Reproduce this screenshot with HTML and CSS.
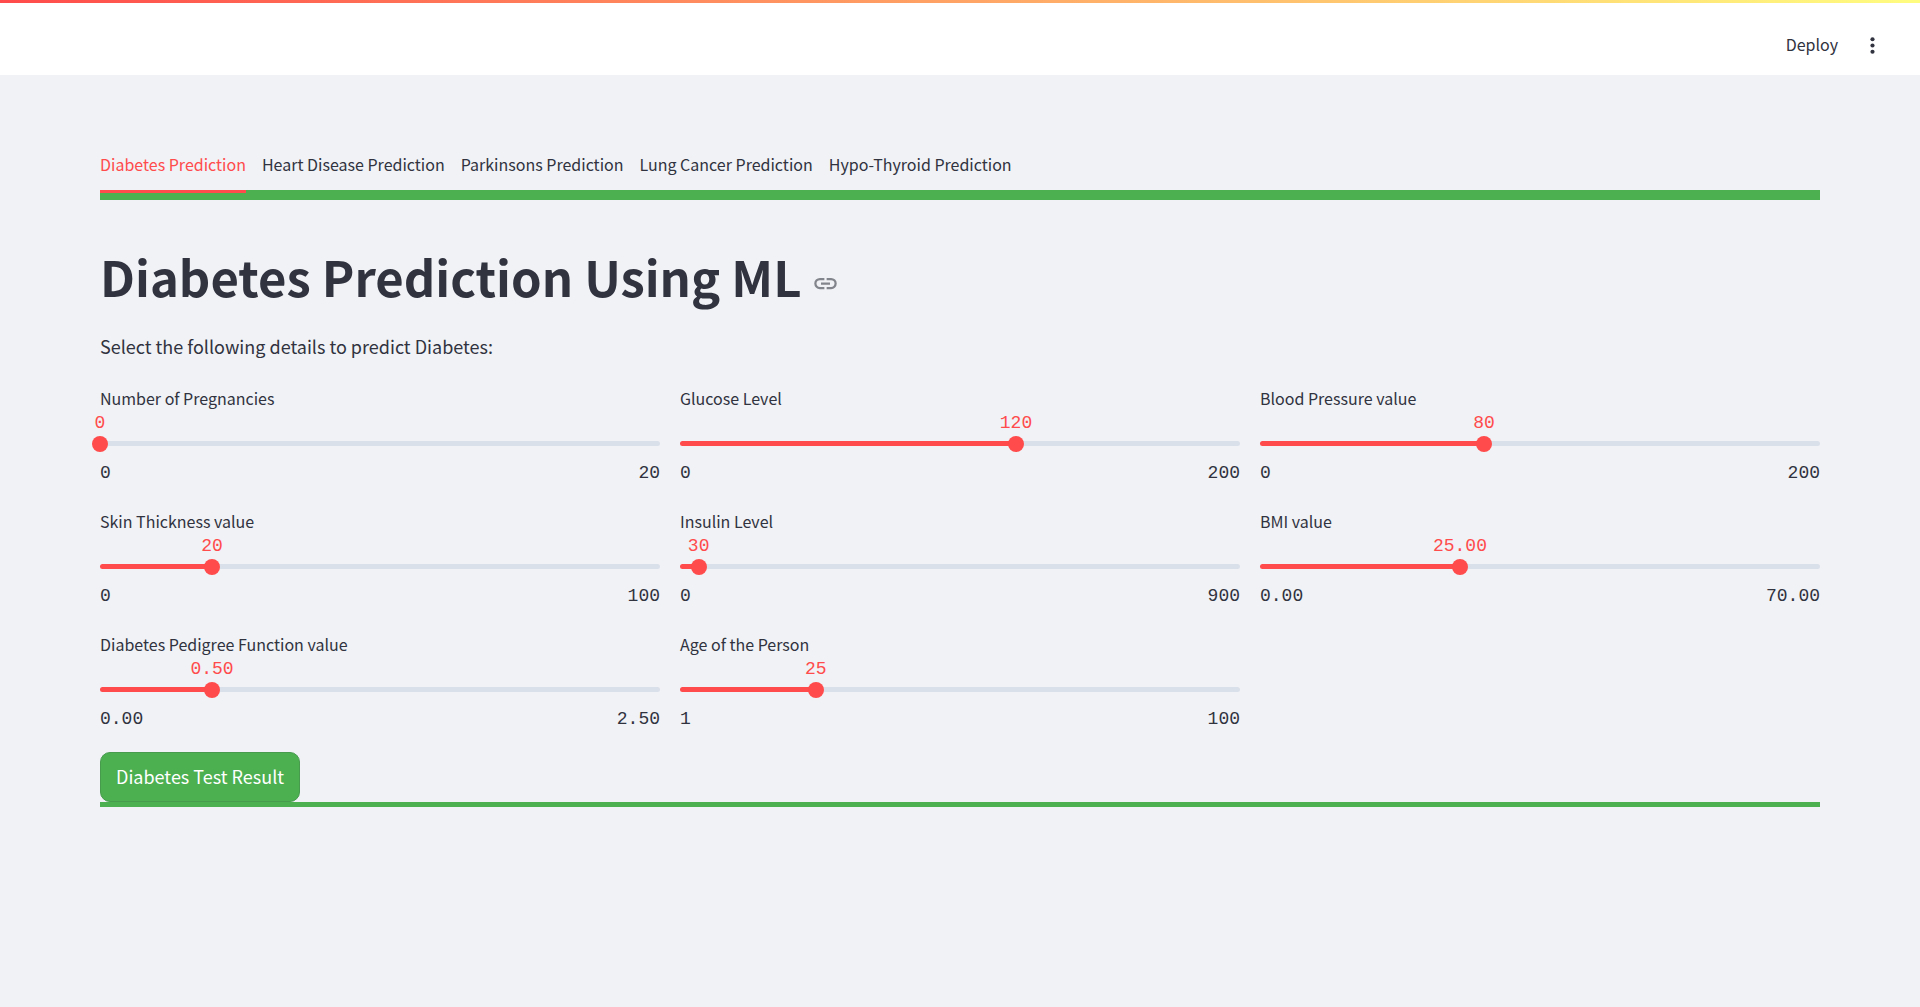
FILE: index.html
```html
<!DOCTYPE html>
<html lang="en">
<head>
<meta charset="utf-8">
<meta name="viewport" content="width=device-width, initial-scale=1">
<title>Diabetes Prediction</title>
<link rel="stylesheet" href="styles.css">
</head>
<body>
<header class="topbar">
  <button class="deploy" type="button">Deploy</button>
  <button class="menu" type="button" aria-label="Main menu">
    <svg viewBox="0 0 24 24" width="25" height="25" fill="currentColor" aria-hidden="true"><circle cx="12" cy="6" r="2"/><circle cx="12" cy="12" r="2"/><circle cx="12" cy="18" r="2"/></svg>
  </button>
</header>
<main class="page">
  <div class="tabs" role="tablist">
    <button class="tab selected" type="button" role="tab" aria-selected="true">Diabetes Prediction</button>
    <button class="tab" type="button" role="tab" aria-selected="false">Heart Disease Prediction</button>
    <button class="tab" type="button" role="tab" aria-selected="false">Parkinsons Prediction</button>
    <button class="tab" type="button" role="tab" aria-selected="false">Lung Cancer Prediction</button>
    <button class="tab" type="button" role="tab" aria-selected="false">Hypo-Thyroid Prediction</button>
  </div>
  <div class="heading">
    <h1 class="title" id="diabetes">Diabetes Prediction Using ML</h1>
    <a class="anchor" href="#diabetes" aria-label="Link to heading">
      <svg viewBox="0 0 24 24" width="27" height="27" fill="currentColor" aria-hidden="true"><path d="M11 17H7q-2.075 0-3.537-1.463T2 12t1.463-3.537T7 7h4v2H7q-1.25 0-2.125.875T4 12t.875 2.125T7 15h4zm-3-4v-2h8v2zm5 4v-2h4q1.25 0 2.125-.875T20 12t-.875-2.125T17 9h-4V7h4q2.075 0 3.538 1.463T22 12t-1.463 3.538T17 17z"/></svg>
    </a>
  </div>
  <p class="intro">Select the following details to predict Diabetes:</p>
  <form class="form">
    <div class="fields">
      <div class="field" style="--pos: 0%">
        <label class="label" for="pregnancies">Number of Pregnancies</label>
        <div class="value-row"><output class="value" for="pregnancies">0</output></div>
        <div class="slider"><span class="rail"></span><input class="range" id="pregnancies" type="range" min="0" max="20" value="0"></div>
        <div class="limits"><span>0</span><span>20</span></div>
      </div>
      <div class="field" style="--pos: 60%">
        <label class="label" for="glucose">Glucose Level</label>
        <div class="value-row"><output class="value" for="glucose">120</output></div>
        <div class="slider"><span class="rail"></span><input class="range" id="glucose" type="range" min="0" max="200" value="120"></div>
        <div class="limits"><span>0</span><span>200</span></div>
      </div>
      <div class="field" style="--pos: 40%">
        <label class="label" for="pressure">Blood Pressure value</label>
        <div class="value-row"><output class="value" for="pressure">80</output></div>
        <div class="slider"><span class="rail"></span><input class="range" id="pressure" type="range" min="0" max="200" value="80"></div>
        <div class="limits"><span>0</span><span>200</span></div>
      </div>
      <div class="field" style="--pos: 20%">
        <label class="label" for="skin">Skin Thickness value</label>
        <div class="value-row"><output class="value" for="skin">20</output></div>
        <div class="slider"><span class="rail"></span><input class="range" id="skin" type="range" min="0" max="100" value="20"></div>
        <div class="limits"><span>0</span><span>100</span></div>
      </div>
      <div class="field" style="--pos: 3.33%">
        <label class="label" for="insulin">Insulin Level</label>
        <div class="value-row"><output class="value" for="insulin">30</output></div>
        <div class="slider"><span class="rail"></span><input class="range" id="insulin" type="range" min="0" max="900" value="30"></div>
        <div class="limits"><span>0</span><span>900</span></div>
      </div>
      <div class="field" style="--pos: 35.71%">
        <label class="label" for="bmi">BMI value</label>
        <div class="value-row"><output class="value" for="bmi">25.00</output></div>
        <div class="slider"><span class="rail"></span><input class="range" id="bmi" type="range" min="0" max="70" step="0.01" value="25"></div>
        <div class="limits"><span>0.00</span><span>70.00</span></div>
      </div>
      <div class="field" style="--pos: 20%">
        <label class="label" for="pedigree">Diabetes Pedigree Function value</label>
        <div class="value-row"><output class="value" for="pedigree">0.50</output></div>
        <div class="slider"><span class="rail"></span><input class="range" id="pedigree" type="range" min="0" max="2.5" step="0.01" value="0.5"></div>
        <div class="limits"><span>0.00</span><span>2.50</span></div>
      </div>
      <div class="field" style="--pos: 24.24%">
        <label class="label" for="age">Age of the Person</label>
        <div class="value-row"><output class="value" for="age">25</output></div>
        <div class="slider"><span class="rail"></span><input class="range" id="age" type="range" min="1" max="100" value="25"></div>
        <div class="limits"><span>1</span><span>100</span></div>
      </div>
    </div>
    <button class="submit" type="button">Diabetes Test Result</button>
  </form>
  <hr class="rule">
</main>
</body>
</html>
```
FILE: styles.css
```css
* {
  box-sizing: border-box;
}

body {
  margin: 0;
  min-height: 100vh;
  background: #f0f2f6;
  color: #31333f;
  font-family: "Noto Sans CJK SC", "Noto Sans", sans-serif;
  font-size: 16px;
  line-height: 26px;
}

button {
  margin: 0;
  padding: 0;
  border: 0;
  background: none;
  color: inherit;
  font: inherit;
  cursor: pointer;
}

svg {
  display: block;
}

.topbar {
  display: flex;
  align-items: center;
  justify-content: flex-end;
  gap: 22px;
  height: 75px;
  padding: 15px 35px 0 0;
  background: linear-gradient(90deg, #ff4b4b, #fffd80) top / 100% 3px no-repeat #fff;
}

.deploy {
  padding-bottom: 2px;
}

.page {
  padding: 75px 100px;
}

.tabs {
  display: flex;
  gap: 16px;
  border-bottom: 10px solid #4caf50;
}

.tab {
  position: relative;
  height: 40px;
  padding-bottom: 12px;
  white-space: nowrap;
}

.tab.selected {
  color: #ff4b4b;
}

.tab.selected::after {
  content: "";
  position: absolute;
  right: 0;
  bottom: -3px;
  left: 0;
  height: 3px;
  background: #ff4b4b;
}

.heading {
  display: flex;
  align-items: center;
  gap: 11px;
  margin-top: 43px;
}

.title {
  margin: 0;
  font-size: 49px;
  font-weight: 700;
  line-height: 66px;
}

.anchor {
  padding-top: 14px;
  color: #83858c;
}

.intro {
  margin: 21px 0 23px;
  font-size: 18px;
  line-height: 32px;
}

.fields {
  display: grid;
  grid-template-columns: repeat(3, 1fr);
  gap: 20px;
}

.label {
  display: block;
}

.value-row {
  position: relative;
  height: 24px;
}

.value {
  position: absolute;
  left: var(--pos);
  transform: translateX(-50%);
  color: #ff4b4b;
}

.value,
.limits {
  font-family: "Liberation Mono", monospace;
  font-size: 18px;
  line-height: 24px;
}

.slider {
  display: grid;
  align-items: center;
  height: 17px;
}

.rail,
.range {
  grid-area: 1 / 1;
}

.rail {
  height: 5px;
  border-radius: 3px;
  background: linear-gradient(90deg, #ff4b4b var(--pos), #dae0ea var(--pos));
}

.range {
  appearance: none;
  height: 16px;
  margin: 0 -8px;
  background: none;
  cursor: pointer;
}

.range::-webkit-slider-thumb {
  appearance: none;
  width: 16px;
  height: 16px;
  border-radius: 50%;
  background: #ff4b4b;
}

.limits {
  display: flex;
  justify-content: space-between;
  padding: 9px 0 3px;
}

.submit {
  display: block;
  height: 50px;
  margin-top: 18px;
  padding: 0 15px 2px;
  border: 1px solid #469b4d;
  border-radius: 10px;
  background: #4caf50;
  color: #fff;
  font-size: 18px;
}

.rule {
  height: 5px;
  margin: 0;
  border: 0;
  background: #4caf50;
}
```
